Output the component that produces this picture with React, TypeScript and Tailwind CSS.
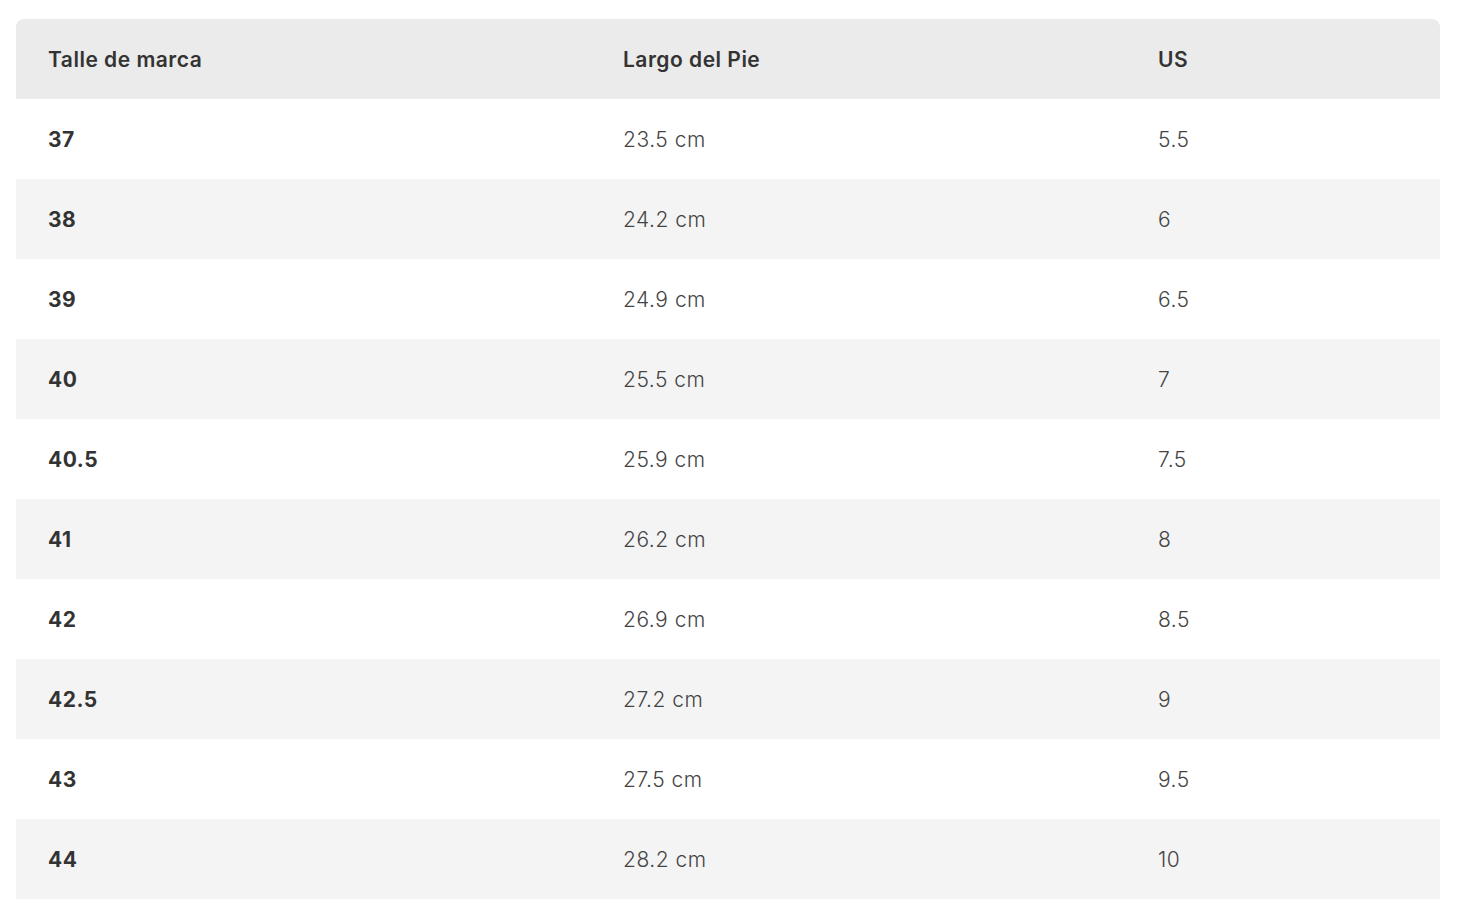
const rows: [string, string, string][] = [
  ['37', '23.5 cm', '5.5'],
  ['38', '24.2 cm', '6'],
  ['39', '24.9 cm', '6.5'],
  ['40', '25.5 cm', '7'],
  ['40.5', '25.9 cm', '7.5'],
  ['41', '26.2 cm', '8'],
  ['42', '26.9 cm', '8.5'],
  ['42.5', '27.2 cm', '9'],
  ['43', '27.5 cm', '9.5'],
  ['44', '28.2 cm', '10'],
]

export default function App() {
  return (
    <div className="min-h-screen w-full bg-white pl-4 pr-6 pt-[19px] pb-[19px] font-['Inter',sans-serif] text-[21px] tracking-[0.5px] text-[#333333]">
      <div className="overflow-hidden rounded-t-lg">
        {/* header */}
        <div className="grid h-20 grid-cols-[575px_535px_1fr] items-center bg-[#ebebeb] pt-[2px] font-semibold">
          <div className="px-8">Talle de marca</div>
          <div className="px-8">Largo del Pie</div>
          <div className="px-8">US</div>
        </div>

        {rows.map(([size, foot, us], i) => (
          <div
            key={size}
            className={`grid h-20 grid-cols-[575px_535px_1fr] items-center pt-[2px] ${i % 2 === 1 ? 'bg-[#f4f4f4]' : 'bg-white'}`}
          >
            <div className="px-8 font-bold">{size}</div>
            <div className="px-8 font-light text-[#444444]">{foot}</div>
            <div className="px-8 font-light text-[#444444]">{us}</div>
          </div>
        ))}
      </div>
    </div>
  )
}
